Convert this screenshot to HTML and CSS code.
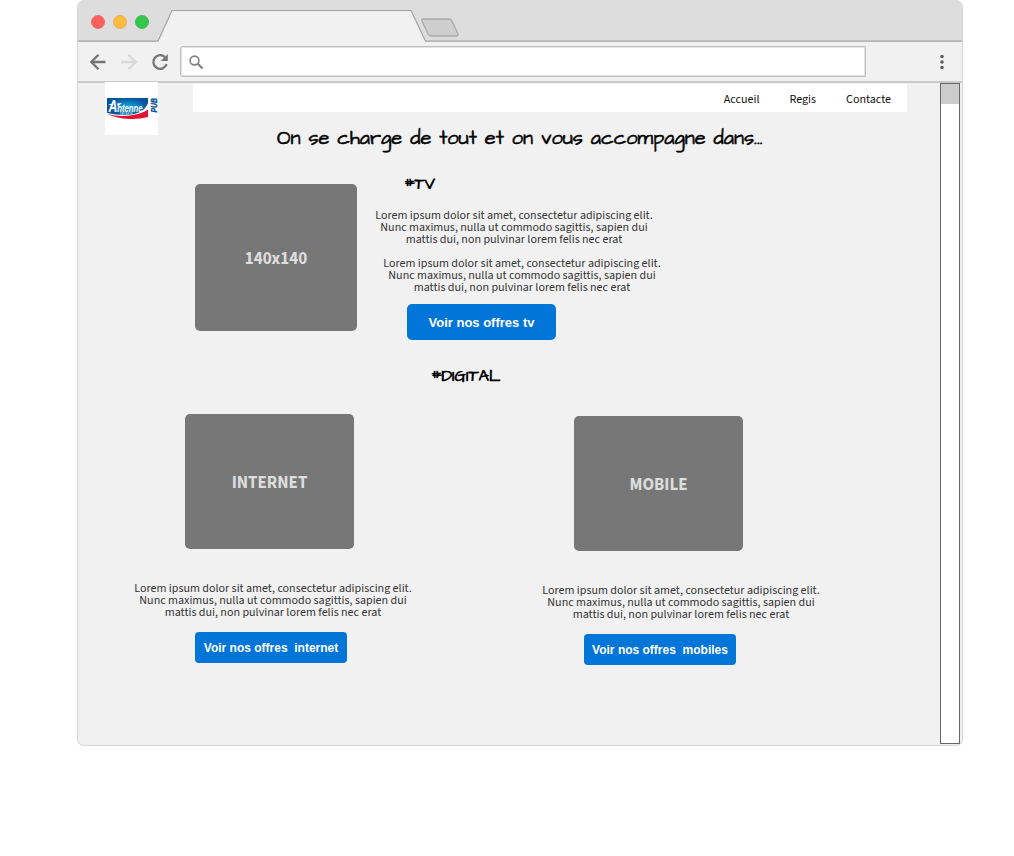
FILE: index.html
```
<!DOCTYPE html>
<html lang="fr">
<head>
<meta charset="utf-8">
<title>Antenne Pub</title>
<link rel="stylesheet" href="styles.css">
</head>
<body>
<div class="window">
  <svg class="tabs" width="884" height="42" viewBox="0 0 884 42">
    <rect width="884" height="42" fill="#ddd"/>
    <path d="M0 41.2H80L94 10.5H333L347.500 41.200H884V42H0Z" fill="#f1f1f1"/>
    <path d="M0 41.200H80L94 10.500H333L347.500 41.200H884" fill="none" stroke="#a2a2a2" stroke-width="1.200"/>
    <path d="M345 19H371Q373 19 374 21L380 34Q380.500 36 378 36H353Q351 36 350 34L344 21Q343.500 19 345 19Z" fill="#cecece" stroke="#ababab" stroke-width="1.300"/>
    <circle cx="20" cy="22" r="6.500" fill="#fc605b" stroke="#e8605c" stroke-width=".8"/>
    <circle cx="42" cy="22" r="6.500" fill="#fdbc40" stroke="#dfa640" stroke-width=".8"/>
    <circle cx="64" cy="22" r="6.500" fill="#34c84a" stroke="#30b044" stroke-width=".8"/>
  </svg>
  <div class="toolbar">
    <svg class="nav-icons" width="102" height="38" viewBox="0 0 102 38" fill="none" stroke-width="2.300">
      <path d="M27.500 20H13.500M20.500 12.800L13.300 20L20.500 27.200" stroke="#757575"/>
      <path d="M43 20H57.500M50.500 12.800L57.700 20L50.500 27.200" stroke="#d9d9d9"/>
      <path d="M87 15.200A6.800 6.800 0 1 0 88.600 22.200" stroke="#757575"/>
      <path d="M89.800 12V19H82.800Z" fill="#757575"/>
    </svg>
    <div class="address">
      <svg width="16" height="16" viewBox="0 0 16 16" fill="none" stroke="#808080"><circle cx="5.500" cy="5.500" r="4.400" stroke-width="1.600"/><path d="M8.800 8.800L13.500 13.500" stroke-width="2.200"/></svg>
    </div>
    <svg class="dots" width="6" height="18" viewBox="0 0 6 18" fill="#606060"><circle cx="3" cy="3.500" r="1.800"/><circle cx="3" cy="9" r="1.800"/><circle cx="3" cy="14.500" r="1.800"/></svg>
  </div>
  <div class="viewport">
    <main class="page">
      <header class="head">
        <svg class="logo" width="53" height="53" viewBox="0 0 53 53">
          <defs><radialGradient id="blue"><stop offset="0" stop-color="#16a9dc"/><stop offset="1" stop-color="#07529c"/></radialGradient></defs>
          <rect width="53" height="53" fill="#fff"/>
          <path d="M2 16H43V21C40 29 32 33 20 33Q10 33 2 31Z" fill="url(#blue)"/>
          <path d="M2 32Q15 35.500 28 33Q38 31 43 27.500V35Q34 37.500 24 37Q12 36.500 2 32Z" fill="#e4122c"/>
          <path d="M3 22.200L8.500 21.800L7.500 23.800ZM12 21.500L17 21L13 24.500Z" fill="#fff"/>
          <text class="logo-name" x="3.500" y="29.500" textLength="34" lengthAdjust="spacingAndGlyphs"><tspan class="logo-initial">A</tspan>ntenne</text>
          <text class="logo-sub" x="15" y="32.500" textLength="13">REUNION</text>
          <text class="logo-pub" transform="translate(51.800 30.500) rotate(-90)" textLength="14.500" lengthAdjust="spacingAndGlyphs">PUB</text>
        </svg>
        <nav class="menu"><a>Accueil</a><a>Regis</a><a>Contacte</a></nav>
        <h1 class="title hand">On se charge de tout et on vous accompagne dans...</h1>
      </header>
      <section class="tv">
        <div class="thumb thumb-tv">140x140</div>
        <div class="tv-info">
          <h2 class="hand tag">#TV</h2>
          <p class="text">Lorem ipsum dolor sit amet, consectetur adipiscing elit.<br>Nunc maximus, nulla ut commodo sagittis, sapien dui<br>mattis dui, non pulvinar lorem felis nec erat</p>
          <p class="text text-shifted">Lorem ipsum dolor sit amet, consectetur adipiscing elit.<br>Nunc maximus, nulla ut commodo sagittis, sapien dui<br>mattis dui, non pulvinar lorem felis nec erat</p>
          <button class="btn btn-tv">Voir nos offres tv</button>
        </div>
      </section>
      <h2 class="hand tag tag-digital">#DIGITAL</h2>
      <section class="digital">
        <article class="offer">
          <div class="thumb">INTERNET</div>
          <p class="text">Lorem ipsum dolor sit amet, consectetur adipiscing elit.<br>Nunc maximus, nulla ut commodo sagittis, sapien dui<br>mattis dui, non pulvinar lorem felis nec erat</p>
          <button class="btn">Voir nos offres&nbsp; internet</button>
        </article>
        <article class="offer offer-mobile">
          <div class="thumb">MOBILE</div>
          <p class="text">Lorem ipsum dolor sit amet, consectetur adipiscing elit.<br>Nunc maximus, nulla ut commodo sagittis, sapien dui<br>mattis dui, non pulvinar lorem felis nec erat</p>
          <button class="btn">Voir nos offres&nbsp; mobiles</button>
        </article>
      </section>
    </main>
    <div class="scrollbar"><div class="thumb-bar"></div></div>
  </div>
</div>
</body>
</html>
```
FILE: styles.css
```
* { box-sizing: border-box; }
body { margin: 0; background: #fff; font-family: "Source Sans Pro", "Source Sans 3", "Noto Sans CJK SC", "Noto Sans", sans-serif; }
h1, h2, p { margin: 0; }
.window { margin-left: 77px; width: 886px; height: 746px; border: 1px solid #d6d6d6; border-top: 0; border-radius: 7px; background: #f1f1f1; overflow: hidden; display: flex; flex-direction: column; }
.tabs { display: block; flex: none; }
.toolbar { height: 41px; flex: none; display: flex; align-items: flex-start; border-bottom: 2px solid #cbcbcb; }
.address { width: 686px; height: 31px; margin-top: 4px; padding: 8px; background: #fff; border: 1px solid #bebebe; border-radius: 3px 0 0 3px; box-shadow: inset 0 0 0 1px #e2e2e2; }
.address svg { display: block; }
.dots { margin: 11px 0 0 73px; }
.viewport { flex: 1; display: flex; }
.page { width: 862px; }
.head { display: grid; grid-template-columns: 53px 714px; grid-template-rows: 28px 42px; column-gap: 35px; padding: 1px 0 0 27px; }
.logo { grid-row: 1 / 3; margin-top: -2px; position: relative; }
.logo-name { font: italic bold 10px "Liberation Sans", sans-serif; fill: #fff; }
.logo-initial { font-size: 16px; }
.logo-sub { font: 3.500px "Liberation Sans", sans-serif; fill: #bfe6f7; }
.logo-pub { font: italic bold 9.500px "Liberation Sans", sans-serif; fill: #064b98; stroke: #064b98; stroke-width: .4px; }
.menu { background: #fff; display: flex; justify-content: flex-end; gap: 30px; padding-right: 16px; font-size: 12px; line-height: 32px; height: 28px; color: #111; }
.hand { font-family: "Architects Daughter", Lato, sans-serif; color: #000; white-space: pre; }
.title { padding: 10px 0 0 84px; font-size: 20px; font-weight: 400; line-height: 32px; -webkit-text-stroke: .5px #000; }
.tv { display: flex; gap: 18px; align-items: flex-start; padding: 12px 0 0 117px; }
.thumb { display: flex; align-items: center; justify-content: center; width: 169px; height: 135px; padding-top: 2px; border-radius: 5px; background: #777; color: #ddd; font-size: 17px; font-weight: 700; }
.thumb-tv { width: 162px; height: 147px; margin-top: 18px; }
.tv-info { width: 286px; padding-top: 8px; }
.tag { font-size: 16.400px; line-height: 22px; font-weight: 700; padding-left: 29px; }
.text { width: 278px; font-size: 12px; line-height: 12px; color: #333; text-align: center; white-space: nowrap; }
.tv-info .text { margin-top: 14px; }
.tv-info .text-shifted { margin: 12px 0 0 8px; }
.btn { display: flex; align-items: center; justify-content: center; width: 152px; height: 31px; padding: 0; border: 0; border-radius: 4px; background: #0275d8; color: #fff; font: bold 12px "Liberation Sans", sans-serif; white-space: nowrap; }
.btn-tv { width: 149px; height: 36px; margin: 10px 0 0 32px; border-radius: 5px; font-size: 13px; }
.tag-digital { padding-left: 353px; margin-top: 26px; }
.digital { display: grid; grid-template-columns: 278px 278px; column-gap: 130px; padding: 26px 0 0 56px; }
.offer .thumb { margin-left: 51px; }
.offer .text { margin-top: 34px; }
.offer .btn { margin: 13px 0 0 61px; }
.offer-mobile { padding-top: 2px; }
.offer-mobile .thumb { margin-left: 32px; }
.offer-mobile .btn { margin-left: 42px; }
.scrollbar { width: 20px; height: 661px; border: 1px solid #666; background: #fff; }
.thumb-bar { height: 20px; background: #ccc; }
```
